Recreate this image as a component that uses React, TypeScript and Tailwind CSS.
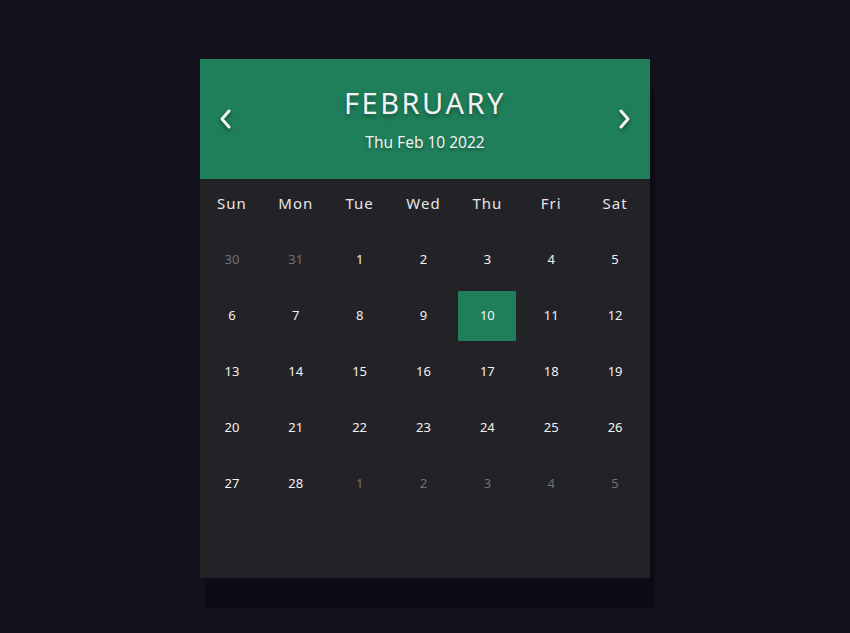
import React from "react";

const weekdays = ["Sun", "Mon", "Tue", "Wed", "Thu", "Fri", "Sat"];

type Day = { n: number; other?: boolean; sel?: boolean };

const days: Day[] = [
  { n: 30, other: true },
  { n: 31, other: true },
  ...Array.from({ length: 28 }, (_, i) => ({ n: i + 1, sel: i + 1 === 10 })),
  { n: 1, other: true },
  { n: 2, other: true },
  { n: 3, other: true },
  { n: 4, other: true },
  { n: 5, other: true },
];

function Chevron({ dir }: { dir: "left" | "right" }) {
  return (
    <svg
      width="14"
      height="20"
      viewBox="0 0 14 20"
      className="drop-shadow-[0_2px_2px_rgba(0,0,0,0.45)]"
    >
      <path
        d={dir === "left" ? "M10 2 L3 10 L10 18" : "M4 2 L11 10 L4 18"}
        fill="none"
        stroke="#f4f4f4"
        strokeWidth="3"
        strokeLinecap="round"
        strokeLinejoin="round"
      />
    </svg>
  );
}

export default function App() {
  return (
    <div
      className="w-[850px] h-[633px] bg-[#12121c] flex justify-center pt-[59px]"
      style={{ fontFamily: "'Noto Sans', 'Open Sans', sans-serif" }}
    >
      <div className="w-[450px] h-[519px] bg-[#232227] shadow-[5px_30px_0_0_#0b0c15] flex flex-col">
        <div className="h-[120px] bg-[#1f7f5a] flex items-center justify-between px-[18px]">
          <button className="w-[16px] flex items-center justify-center mt-[0px]">
            <Chevron dir="left" />
          </button>
          <div className="flex flex-col items-center">
            <div className="text-[29px] leading-none tracking-[2.5px] text-[#f2f2f2] font-normal [text-shadow:0_3px_4px_rgba(0,0,0,0.35)]">
              FEBRUARY
            </div>
            <div className="text-[15.5px] leading-none text-[#f2f2f2] mt-[18px] [text-shadow:0_2px_3px_rgba(0,0,0,0.3)]">
              Thu Feb 10 2022
            </div>
          </div>
          <button className="w-[16px] flex items-center justify-center mt-[0px]">
            <Chevron dir="right" />
          </button>
        </div>
        <div className="grid grid-cols-7 gap-x-[6px] pl-[3px] pr-[6px]">
          {weekdays.map((w) => (
            <div
              key={w}
              className="h-[49px] flex items-center justify-center text-[15px] tracking-[1px] text-[#e6e6e6]"
            >
              {w}
            </div>
          ))}
        </div>
        <div className="grid grid-cols-7 gap-x-[6px] gap-y-[6px] pl-[3px] pr-[6px] mt-[7px]">
          {days.map((d, i) => (
            <div
              key={i}
              className={
                "h-[50px] flex items-center justify-center text-[13px] " +
                (d.sel
                  ? "bg-[#1f7f5a] text-[#f4f4f4]"
                  : d.other
                  ? "text-[#707075]"
                  : "text-[#f2f2f2]")
              }
            >
              {d.n}
            </div>
          ))}
        </div>
      </div>
    </div>
  );
}
